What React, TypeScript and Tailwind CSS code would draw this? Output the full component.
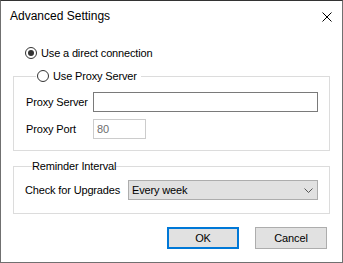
import React from 'react';

function Radio({ checked }: { checked?: boolean }) {
  return (
    <span className="w-[12px] h-[12px] rounded-full border border-[#333] bg-white flex items-center justify-center shrink-0">
      {checked && <span className="w-[6px] h-[6px] rounded-full bg-[#333]" />}
    </span>
  );
}

export default function App() {
  return (
    <div
      className="w-[343px] h-[263px] bg-white border-x border-b border-[#707070] border-t border-t-[#333] flex flex-col text-[11px] tracking-[-0.15px] text-black overflow-hidden"
      style={{ fontFamily: '"Liberation Sans", Arial, sans-serif' }}
    >
      {/* title bar */}
      <div className="h-[30px] flex items-center justify-between pl-[9px] pr-[10px]">
        <span className="text-[12px] leading-none tracking-normal">Advanced Settings</span>
        <svg width="10" height="10" viewBox="0 0 10 10" className="mt-[1px]">
          <path d="M0.5 0.5 L9.5 9.5 M9.5 0.5 L0.5 9.5" stroke="#000" strokeWidth="1" />
        </svg>
      </div>

      <div className="flex flex-col px-[12px]">
        <label className="h-[16px] mt-[14px] ml-[12px] flex items-center gap-[4px]">
          <Radio checked />
          <span>Use a direct connection</span>
        </label>

        <fieldset className="mt-[7px] border border-[#dcdcdc] pl-[12px] pr-[11px] pb-[11px]">
          <legend className="ml-[10px] pl-[1px] pr-[4px] h-[16px] flex items-center gap-[4px]">
            <Radio />
            <span>Use Proxy Server</span>
          </legend>
          <div className="flex flex-col gap-[7px] pt-[8px]">
            <div className="flex items-center">
              <span className="w-[67px] shrink-0">Proxy Server</span>
              <div className="h-[20px] flex-1 border border-[#7a7a7a] bg-white" />
            </div>
            <div className="flex items-center">
              <span className="w-[67px] shrink-0">Proxy Port</span>
              <div className="h-[20px] w-[53px] border border-[#cccccc] bg-white flex items-center pl-[3px] text-[#6d6d6d]">
                80
              </div>
            </div>
          </div>
        </fieldset>

        <fieldset className="mt-[7px] border border-[#dcdcdc] pl-[11px] pr-[11px] pb-[13px]">
          <legend className="ml-[7px] h-[16px] flex items-center">Reminder Interval</legend>
          <div className="flex items-center pt-[6px]">
            <span className="w-[103px] shrink-0">Check for Upgrades</span>
            <div className="h-[20px] flex-1 border border-[#adadad] bg-[#e1e1e1] flex items-center justify-between pl-[3px] pr-[4px]">
              <span>Every week</span>
              <svg width="9" height="5" viewBox="0 0 9 5">
                <path d="M0.5 0.5 L4.5 4.5 L8.5 0.5" stroke="#555" strokeWidth="1" fill="none" />
              </svg>
            </div>
          </div>
        </fieldset>

        <div className="mt-[13px] flex justify-end gap-[16px] pr-[3px]">
          <button className="w-[72px] h-[22px] border-2 border-[#0078d7] bg-[#e1e1e1] text-[11px]">OK</button>
          <button className="w-[72px] h-[22px] border border-[#adadad] bg-[#e1e1e1] text-[11px]">Cancel</button>
        </div>
      </div>
    </div>
  );
}
